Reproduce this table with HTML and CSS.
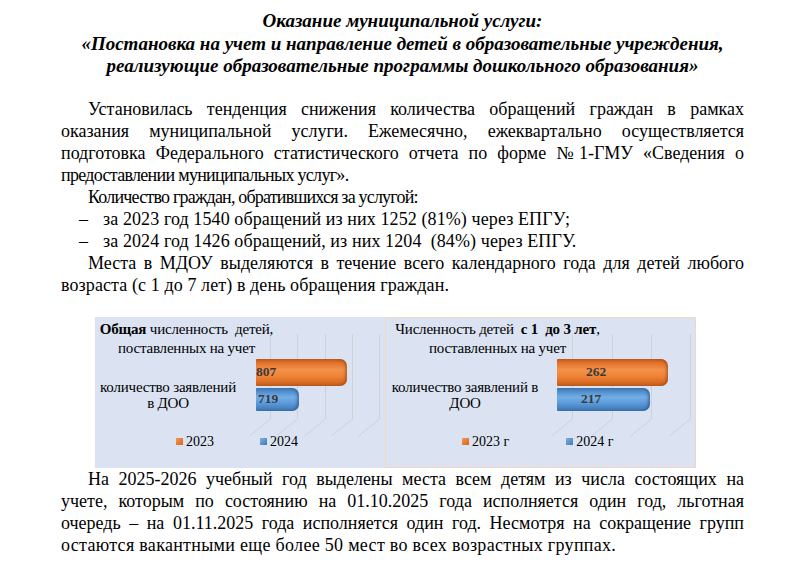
FILE: index.html
```html
<!DOCTYPE html>
<html lang="ru">
<head>
<meta charset="utf-8">
<title>Оказание муниципальной услуги</title>
<link rel="stylesheet" href="styles.css">
</head>
<body>
<main class="page">
  <h1 class="doc-title">
    <span class="title-line">Оказание муниципальной услуги:</span>
    <span class="title-line">«Постановка на учет и направление детей в образовательные учреждения,</span>
    <span class="title-line">реализующие образовательные программы дошкольного образования»</span>
  </h1>

  <p class="para">
    <span class="jl first">Установилась тенденция снижения количества обращений граждан в рамках</span>
    <span class="jl">оказания муниципальной услуги. Ежемесячно, ежеквартально осуществляется</span>
    <span class="jl">подготовка Федерального статистического отчета по форме №1-ГМУ «Сведения о</span>
    <span class="ll tight-a">предоставлении муниципальных услуг».</span>
  </p>
  <p class="para">
    <span class="ll first tight-b">Количество граждан, обратившихся за услугой:</span>
  </p>
  <ul class="dash-list">
    <li class="dash-item">за 2023 год 1540 обращений из них 1252 (81%) через ЕПГУ;</li>
    <li class="dash-item">за 2024 год 1426 обращений, из них 1204&nbsp; (84%) через ЕПГУ.</li>
  </ul>
  <p class="para">
    <span class="jl first">Места в МДОУ выделяются в течение всего календарного года для детей любого</span>
    <span class="ll wide">возраста (с 1 до 7 лет) в день обращения граждан.</span>
  </p>

  <section class="charts">
    <figure class="chart chart-total">
      <svg class="grid" width="290" height="151" viewBox="0 0 290 151" aria-hidden="true">
        <g fill="none" stroke="#cdd2d9" stroke-width="1">
          <path d="M175.5 17V102L154.5 119"/>
          <path d="M202.5 17V102L181.5 119"/>
          <path d="M230.5 17V102L209.5 119"/>
          <path d="M257.5 17V102L236.5 119"/>
          <path d="M284.5 17V102L263.5 119"/>
        </g>
      </svg>
      <div class="chart-title">
        <span class="cl"><b>Общая</b> численность&nbsp; детей,</span>
        <span class="cl">поставленных на учет</span>
      </div>
      <div class="chart-body">
        <div class="cat-label">
          <span class="cl">количество заявлений</span>
          <span class="cl">в ДОО</span>
        </div>
        <div class="bars bars-total">
          <div class="bar bar-2023" style="width:91px"><span class="val">807</span></div>
          <div class="bar bar-2024" style="width:43px"><span class="val">719</span></div>
        </div>
      </div>
      <div class="legend legend-total">
        <span class="legend-item"><i class="mark mark-2023"></i>2023</span>
        <span class="legend-item"><i class="mark mark-2024"></i>2024</span>
      </div>
    </figure>

    <figure class="chart chart-young">
      <svg class="grid" width="311" height="151" viewBox="0 0 311 151" aria-hidden="true">
        <g fill="none" stroke="#cdd2d9" stroke-width="1">
          <path d="M187.5 17V102L166.5 119"/>
          <path d="M227.5 17V102L206.5 119"/>
          <path d="M266.5 17V102L245.5 119"/>
          <path d="M305.5 17V102L284.5 119"/>
        </g>
      </svg>
      <div class="chart-title">
        <span class="cl">Численность детей&nbsp; <b>с 1&nbsp; до 3 лет</b>,</span>
        <span class="cl">поставленных на учет</span>
      </div>
      <div class="chart-body">
        <div class="cat-label">
          <span class="cl">количество заявлений в</span>
          <span class="cl">ДОО</span>
        </div>
        <div class="bars bars-young">
          <div class="bar bar-2023" style="width:111px"><span class="val val-a">262</span></div>
          <div class="bar bar-2024" style="width:93px"><span class="val val-b">217</span></div>
        </div>
      </div>
      <div class="legend legend-young">
        <span class="legend-item"><i class="mark mark-2023"></i>2023 г</span>
        <span class="legend-item"><i class="mark mark-2024"></i>2024 г</span>
      </div>
    </figure>
  </section>

  <p class="para">
    <span class="jl first">На 2025-2026 учебный год выделены места всем детям из числа состоящих на</span>
    <span class="jl">учете, которым по состоянию на 01.10.2025 года исполняется один год, льготная</span>
    <span class="jl">очередь – на 01.11.2025 года исполняется один год. Несмотря на сокращение групп</span>
    <span class="ll loose">остаются вакантными еще более 50 мест во всех возрастных группах.</span>
  </p>
</main>
</body>
</html>
```

FILE: styles.css
```css
html, body {
  margin: 0;
  padding: 0;
  background: #ffffff;
}

body {
  font-family: "Liberation Serif", "Times New Roman", serif;
  color: #000000;
}

.page {
  width: 683px;
  margin-left: 61px;
  padding-top: 10px;
}

.doc-title {
  margin: 0 0 20px 0;
  font-size: 19px;
  line-height: 22.5px;
  font-weight: bold;
  font-style: italic;
  text-align: center;
  letter-spacing: 0;
}

.title-line {
  display: block;
}

.para {
  margin: 0;
  font-size: 18px;
  line-height: 22px;
}

.jl,
.ll {
  display: block;
  white-space: nowrap;
}

.jl {
  text-align: justify;
  text-align-last: justify;
  white-space: normal;
}

.first {
  padding-left: 27px;
}

.tight-a {
  letter-spacing: -0.7px;
}

.tight-b {
  letter-spacing: -0.8px;
}

.wide {
  letter-spacing: 0.1px;
}

.loose {
  letter-spacing: 0.3px;
}

.dash-list {
  list-style: none;
  margin: 0;
  padding: 0;
  font-size: 18px;
  line-height: 22px;
}

.dash-item {
  display: flex;
  padding-left: 18px;
  letter-spacing: 0.1px;
}

.dash-item::before {
  content: "–";
  flex: 0 0 24px;
  letter-spacing: 0;
}

/* charts */
.charts {
  display: flex;
  margin: 21px 0 0 34px;
}

.chart {
  position: relative;
  margin: 0;
  height: 151px;
  box-sizing: border-box;
  background: #dbe3f2;
  padding-top: 3px;
  font-size: 15px;
}

.chart-total {
  width: 290px;
}

.chart-young {
  width: 311px;
  border: 1px solid #f3d6c0;
  padding-top: 2px;
}

.grid {
  position: absolute;
  left: 0;
  top: 0;
}

.chart-young .grid {
  left: -1px;
  top: -1px;
}

.cl {
  display: block;
  white-space: nowrap;
}

.chart-title {
  position: relative;
  text-align: center;
  line-height: 19px;
  letter-spacing: -0.2px;
}

.chart-total .chart-title {
  width: 177px;
  margin-left: 3px;
}

.chart-young .chart-title {
  width: 223px;
  margin-left: 0;
}

.chart-body {
  position: relative;
  display: flex;
  align-items: flex-start;
  margin-top: 1px;
}

.cat-label {
  text-align: center;
  line-height: 16px;
  margin-top: 20px;
  letter-spacing: -0.2px;
}

.chart-total .cat-label {
  width: 142px;
  margin-left: 2px;
}

.chart-young .cat-label {
  width: 154px;
  margin-left: 2px;
}

.bars {
  display: flex;
  flex-direction: column;
  gap: 2px;
}

.bars-total {
  margin-left: 17px;
}

.bars-young {
  margin-left: 15px;
}

.bar {
  box-sizing: border-box;
  display: flex;
  align-items: center;
  border-radius: 1px 7px 7px 1px;
  font-size: 13.5px;
  font-weight: bold;
  color: #3a3a3a;
}

.bar-2023 {
  height: 27px;
  background: linear-gradient(to bottom, #b8581a 0, #e2712a 14%, #f3924a 40%, #ef8538 62%, #dd6e25 84%, #b9581b 100%);
  box-shadow: inset -4px 0 3px -2px rgba(120, 50, 0, 0.45);
}

.bar-2024 {
  height: 23px;
  background: linear-gradient(to bottom, #3c74b0 0, #4f8cca 14%, #73aee5 40%, #5f9ddc 62%, #4a87c6 84%, #3a6fa8 100%);
  box-shadow: inset -4px 0 3px -2px rgba(20, 50, 100, 0.45);
}

.val {
  line-height: 1;
}

.bars-total .bar-2024 .val {
  padding-left: 2px;
}

.val-a {
  padding-left: 29px;
}

.val-b {
  padding-left: 24px;
}

.legend {
  position: relative;
  display: flex;
  font-size: 14px;
  line-height: 16px;
  margin-top: 23px;
}

.legend-item {
  display: inline-flex;
  align-items: center;
}

.mark {
  display: inline-block;
  width: 7px;
  height: 7px;
  margin-right: 3px;
}

.mark-2023 {
  background: linear-gradient(135deg, #f29a55, #d9641c);
}

.mark-2024 {
  background: linear-gradient(135deg, #7bb1e3, #3f79b8);
}

.legend-total {
  padding-left: 81px;
  gap: 46px;
}

.legend-young {
  padding-left: 76px;
  gap: 57px;
}
```
